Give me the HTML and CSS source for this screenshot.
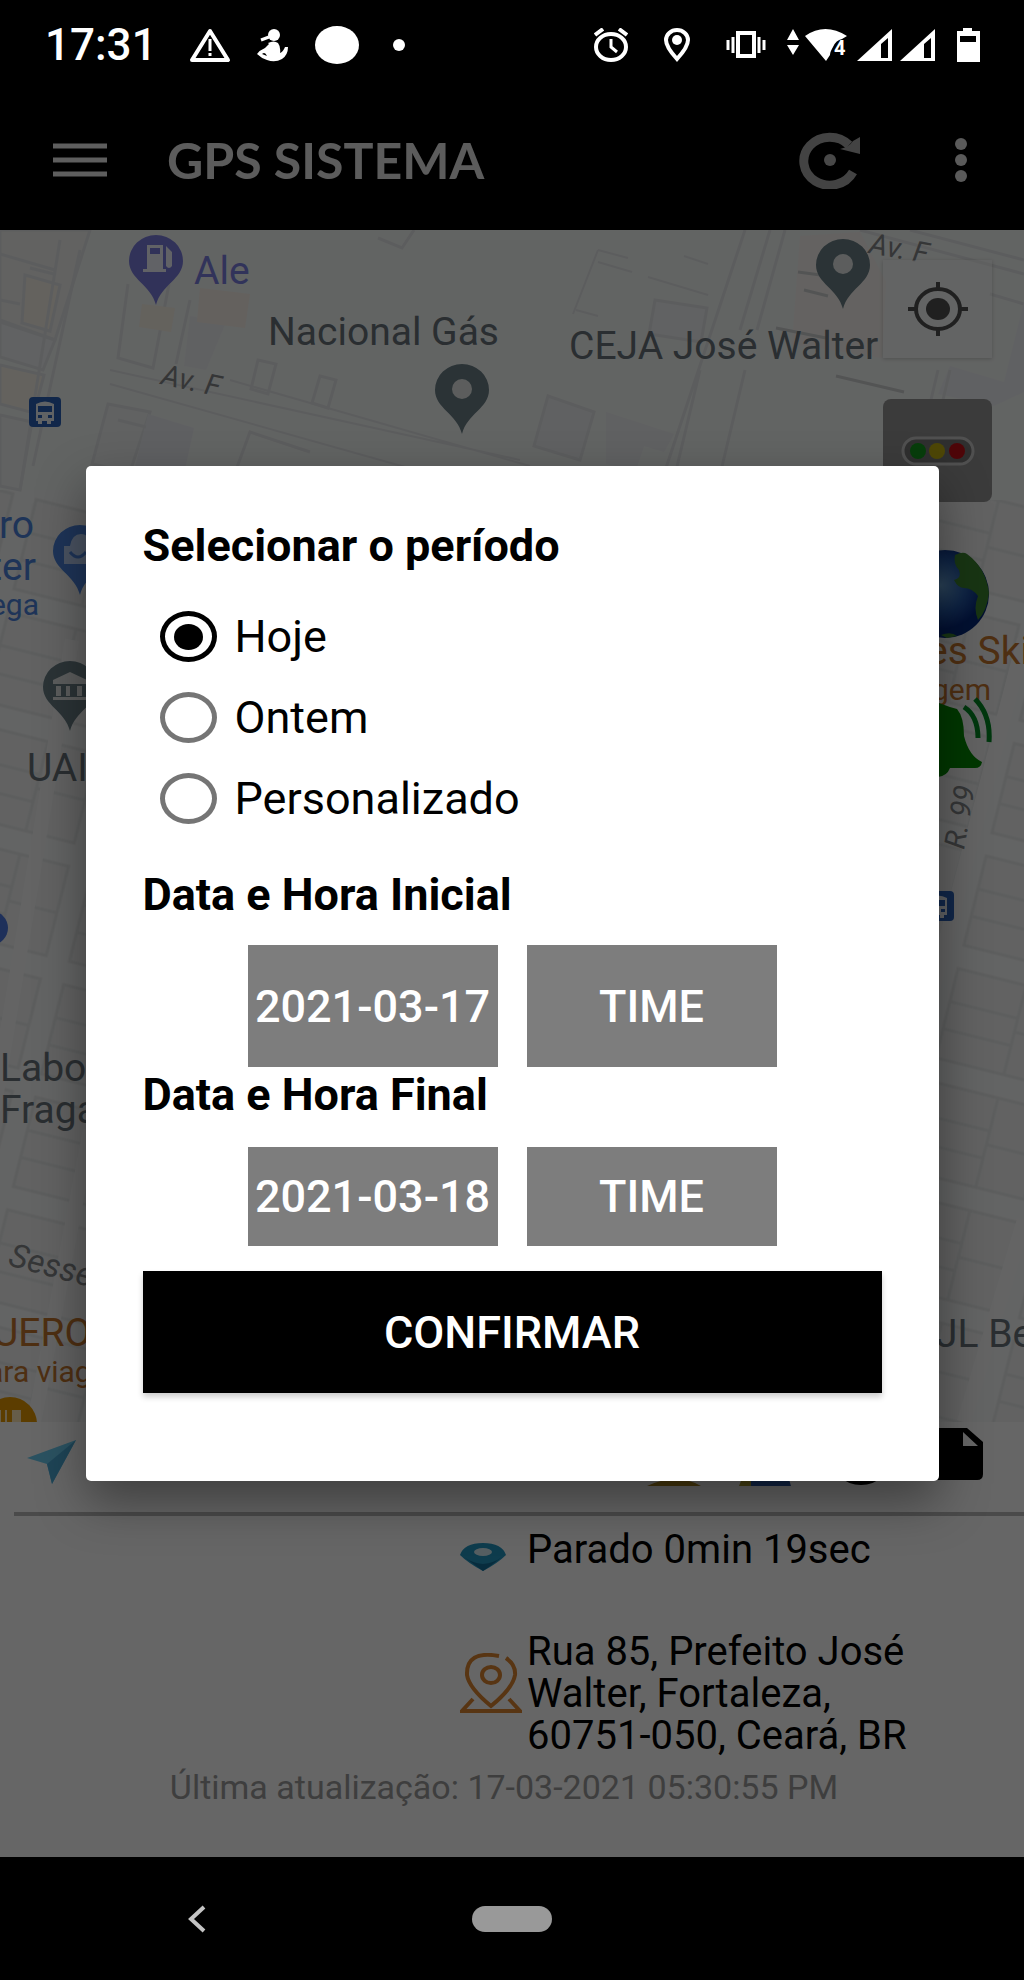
FILE: index.html
```html
<!DOCTYPE html>
<html lang="pt-BR">
<head>
<meta charset="utf-8">
<meta name="viewport" content="width=device-width, initial-scale=1">
<title>GPS Sistema</title>
<link rel="stylesheet" href="styles.css">
</head>
<body>
<div class="status">
  <span class="clock">17:31</span>
  <div class="notices">
    <svg width="42" height="34" viewBox="0 0 42 34"><path d="M21 3 39 32H3Z" fill="none" stroke="#fff" stroke-width="4" stroke-linejoin="round"/><path d="M21 11v12M21 25v3" stroke="#fff" stroke-width="3"/></svg>
    <svg width="32" height="34" viewBox="0 0 32 34" fill="#fff"><ellipse cx="17" cy="7" rx="6" ry="6"/><path d="M11 15q6-3 10 0 3 4 2 10 3-1 5-6h3q0 8-6 12-7 4-15 1-6-2-10-6 3-4 8-6l4-4z"/><path d="M4 12l8-3" stroke="#fff" stroke-width="3"/><path d="M5 26q3-3 5 2z" fill="#000"/></svg>
    <svg width="44" height="38" viewBox="0 0 44 38"><ellipse cx="22" cy="19" rx="22" ry="19" fill="#fff"/></svg>
    <svg width="28" height="12" viewBox="0 0 28 12"><circle cx="14" cy="6" r="6" fill="#fff"/></svg>
  </div>
  <div class="notices modes">
    <svg width="34" height="34" viewBox="0 0 34 34" fill="none" stroke="#fff"><ellipse cx="17" cy="19" rx="15" ry="13" stroke-width="4"/><path d="M1 7l8-6M33 7l-8-6" stroke-width="4"/><path d="M17 11v8l6 5" stroke-width="3"/></svg>
    <svg width="26" height="34" viewBox="0 0 26 34"><path d="M13 31Q2 19 2 12a11 10 0 0 1 22 0q0 7-11 19z" fill="none" stroke="#fff" stroke-width="4"/><circle cx="13" cy="12" r="5" fill="#fff"/></svg>
    <svg width="40" height="28" viewBox="0 0 40 28" fill="none" stroke="#fff"><rect x="12" y="2" width="16" height="23" stroke-width="4"/><path d="M2 9v10M38 9v10M7 6v16M33 6v16" stroke-width="3"/></svg>
  </div>
  <div class="notices signal">
    <svg width="150" height="34" viewBox="0 0 150 34" fill="#fff"><path d="M7 1l6 11H1zM7 27l6-10H1z"/><path d="M19 8q20-14 42 0l-5 3q-6 1-9 8-3 5-3 8l-4 6z"/><path d="M71 33 106 1v32zM114 33 149 1v32z"/><path d="M95 16l7-6v20h-7zM138 16l7-6v20h-7z" fill="#000"/><text x="48" y="27" class="wifi-band">4</text></svg>
    <svg width="24" height="36" viewBox="0 0 24 36"><path d="M7 1h9v3h8v31H1V4h6z" fill="#fff"/><path d="M4 9h16v6H4z" fill="#000"/></svg>
  </div>
</div>

<div class="screen">
  <header class="appbar">
    <button class="icon-btn" aria-label="Menu"><svg width="54" height="36" viewBox="0 0 54 36"><path d="M0 4h54M0 18h54M0 32h54" stroke="#ececec" stroke-width="5"/></svg></button>
    <h1>GPS SISTEMA</h1>
    <button class="icon-btn" aria-label="Atualizar"><svg width="62" height="58" viewBox="0 0 62 58"><path d="M54 41A26 24 0 1 1 50 14" fill="none" stroke="#a8a8a8" stroke-width="9"/><path d="M61 6v17l-20-5q9-2 13-8z" fill="#a8a8a8"/><circle cx="31" cy="29" r="6" fill="#b4b4b4"/></svg></button>
    <button class="icon-btn more" aria-label="Mais opções"><svg width="12" height="44" viewBox="0 0 12 44" fill="#e0e0e0"><circle cx="6" cy="6" r="6"/><circle cx="6" cy="22" r="6"/><circle cx="6" cy="38" r="6"/></svg></button>
  </header>

  <section class="map">
    <svg class="map-canvas" viewBox="0 230 1024 1192" role="img" aria-label="Mapa">
      <defs>
        <pattern id="blocks" width="144" height="116" patternUnits="userSpaceOnUse" patternTransform="rotate(14)">
          <rect width="144" height="116" fill="#f8f9f9"/>
          <path d="M12 12h120v92H12zM12 46h70v28H12M82 12v92M82 60h50" fill="#f4f6f6" stroke="#e8ebeb" stroke-width="3"/>
        </pattern>
        <g id="pin"><path d="M0 70C-5 50-27 44-27 26a27 26 0 0 1 54 0C27 44 5 50 0 70z"/></g>
        <g id="bus"><rect width="32" height="30" rx="4" fill="#2c63b8"/><path d="M7 7q9-5 18 0v17h-3v3h-4v-3h-5v3H9v-3H7z" fill="#f0f4fa"/><path d="M9 9h14v6H9zM9 18h4v3H9zM19 18h4v3h-4z" fill="#2c63b8"/></g>
      </defs>
      <rect y="230" width="1024" height="1192" fill="#f6f9f8"/>
      <rect y="490" width="90" height="932" fill="url(#blocks)"/>
      <rect x="930" y="500" width="94" height="922" fill="url(#blocks)"/>
      <g stroke="#e6e9ea" stroke-width="3" fill="none">
        <path d="M0 230h90l-35 110-55-20z" fill="#f4f4f3"/>
        <path d="M25 275l35 10-10 46-28-8z" fill="#faf5ea"/>
        <path d="M0 322l55 18-12 30-43-13z" fill="#f2f4f7"/><path d="M0 365l44 10-10 38-34-9z" fill="#faf6ec"/>
        <path d="M0 415l32 7-12 68-20-4z" fill="#f3f5f5"/>
        <path d="M0 254l55 16M30 268l24 6M0 300l20 4"/>
        <path d="M80 250L33 466M60 240L20 490"/>
        <path d="M128 284l-10 74 35 10 16-84M190 300l-14 64"/>
        <path d="M190 316l36 6-20 48-22-4z" fill="#f1f3f6" stroke="none"/>
        <path d="M200 288l50 6-5 34-48-6z" fill="#faf3ea" stroke="none"/><path d="M142 304l33 4-4 24-32-5z" fill="#faf4e8" stroke="none"/>
        <path d="M108 404l42 8-20 60-38-8z" fill="#f2f4f5"/><path d="M148 414l46 14-10 46-50-4z" fill="#eef1f6" stroke="none"/>
        <path d="M118 420l28 7M236 470l14-38 60 20"/><path d="M258 360l18 4-8 30-17-5zM320 376l16 4-8 28-16-5z"/>
        <path d="M378 238l24 10 12-18"/>
        <path d="M110 370L520 460M110 384L430 474M230 380L530 466" stroke-width="2"/>
        <path d="M745 230L660 486M770 230L740 330M700 370L675 475M745 370L720 475M785 230l-28 100"/>
        <path d="M598 250l30 8M684 256l24 8M648 277l60 18M576 310l22 6M598 250l-25 64M598 262l34 10" stroke-width="2"/>
        <path d="M655 300l52 8-6 34-52-8z" fill="#f2f4f7"/>
        <path d="M800 236l60-4 26 50-4 76-90-14z" fill="#faf6f2" stroke="none"/>
        <path d="M776 328l50 10M804 290l24 6M798 272l30 4M836 376l68 16" stroke="#cfd2d3"/>
        <path d="M548 396l46 16-14 48-46-14z" fill="#f1f3f6"/><path d="M606 412l68 22-10 18-20-6-8 24-30-6z" fill="#f0f2f5" stroke="none"/>
        <path d="M860 230l164 44M910 230l114 30M990 294l34 10"/>
        <path d="M950 366l54 16 20-80v90l-30 14-56-12z" fill="#f1f3f7" stroke="none"/>
        <path d="M938 370l-8 34M950 370l-8 34"/>
      </g>
      <g stroke="#fbfbfb" stroke-width="14"><path d="M72 640L-6 1110M90 1130l-56 292M1024 640L930 1000M1024 1220l-60 202"/></g>

      <use href="#pin" x="156" y="235" fill="#7c7edf"/>
      <path d="M147 245h16v24h3v3h-23v-3h4zM150 248v6h10v-6zM166 246l6 6v14q-3 4-6 0v-8" fill="#f2f4ff" fill-rule="evenodd"/>
      <g fill="#6b8088"><use href="#pin" x="462" y="364"/><use href="#pin" x="843" y="239"/><use href="#pin" x="70" y="661"/></g>
      <g fill="#e6e9e8"><circle cx="462" cy="389" r="10"/><circle cx="843" cy="264" r="10"/><path d="M53 680l17-8 17 8v4H53zM56 686h5v10h-5zM66 686h4v10h-4zM77 686h5v10h-5zM53 697h34v3H53z"/></g>
      <use href="#pin" x="80" y="525" fill="#4b83dc"/>
      <path d="M64 546h30l-2 18H64zM70 546q2-12 11-12t8 12" fill="#b8d0f4"/><path d="M70 552q8 10 16 0" fill="none" stroke="#4b83dc" stroke-width="3"/>
      <circle cx="-9" cy="928" r="17" fill="#4b78e0"/>
      <circle cx="10" cy="1424" r="27" fill="#e69a00"/><path d="M-6 1410v12M0 1410v12M6 1410v12M13 1411h7v11h-7z" stroke="#ffe9b8" stroke-width="2" fill="#ffe9b8"/>
      <use href="#bus" x="29" y="397"/><use href="#bus" x="922" y="891"/>

      <g class="place">
        <text x="268" y="345">Nacional Gás</text>
        <text x="569" y="359">CEJA José Walter</text>
        <text x="27" y="781">UAI</text>
        <text x="0" y="1081">Labo</text>
        <text x="0" y="1123">Fraga</text>
        <text x="936" y="1347">JL Be</text>
        <text x="194" y="284" class="fuel">Ale</text>
      </g>
      <g class="place shop">
        <text x="34" y="538">ro</text><text x="36" y="580">ter</text><text x="39" y="615" class="sub">ega</text>
      </g>
      <g class="place food">
        <text x="-7" y="1346">UERO</text><text x="-13" y="1382" class="sub">ara viag</text>
        <text x="927" y="664">es Ski</text><text x="932" y="700" class="sub">gem</text>
      </g>
      <g class="street">
        <text transform="translate(160 384) rotate(12)">Av. F</text>
        <text transform="translate(868 253) rotate(10)">Av. F</text>
        <text transform="translate(7 1265) rotate(15)" class="wide">Sesse</text>
        <text transform="translate(964 850) rotate(-80)">R. 99</text>
      </g>
    </svg>
    <div class="map-tools">
      <button class="tool locate" aria-label="Minha localização"><svg width="60" height="54" viewBox="0 0 60 54"><ellipse cx="30" cy="27" rx="22" ry="20" fill="none" stroke="#505050" stroke-width="4"/><ellipse cx="30" cy="27" rx="12" ry="11" fill="#505050"/><path d="M30 0v9M30 45v9M0 27h9M51 27h9" stroke="#505050" stroke-width="4"/></svg></button>
      <button class="tool traffic" aria-label="Trânsito"><svg width="74" height="30" viewBox="0 0 74 30"><rect x="2" y="2" width="70" height="26" rx="13" fill="#777" stroke="#c8c8c8" stroke-width="3"/><circle cx="17" cy="15" r="8" fill="#129a1c"/><circle cx="36" cy="15" r="8" fill="#c0b010"/><circle cx="56" cy="15" r="8" fill="#c41018"/></svg></button>
      <button class="tool" aria-label="Tipo de mapa"><svg width="109" height="102" viewBox="0 0 109 102"><defs><radialGradient id="sea" cx="45%" cy="40%"><stop offset="0" stop-color="#6aa4d8"/><stop offset=".6" stop-color="#2458a8"/><stop offset="1" stop-color="#06287c"/></radialGradient></defs><ellipse cx="62" cy="51" rx="44" ry="44" fill="url(#sea)"/><path d="M72 12q8-4 12-1 19 14 22 39-2 18-11 27-5-12 0-24-6-8-14-8-6 0-10-8 8-2 5-10-6-6-4-15z" fill="#3d8430"/><path d="M58 92q10-4 16 1l-10 2z" fill="#3d8430"/></svg></button>
      <button class="tool" aria-label="Alertas"><svg width="109" height="94" viewBox="0 0 109 94"><path d="M56 17q10 4 18 6 7 8 7 27 5 20 18 26-1 6-7 6H67q-3 8-12 9-10-1-13-9H10q-6-6 0-10 14-10 14-30 4-24 24-25z" fill="#008a00"/><path d="M81 21q14 9 14 31M92 13q16 16 14 43" fill="none" stroke="#008a24" stroke-width="5"/></svg></button>
    </div>
  </section>

  <section class="details">
    <div class="actions">
      <button class="icon-btn" aria-label="Navegar"><svg width="50" height="60" viewBox="0 0 50 60"><path d="M49 14 25 58 20 38 0 32z" fill="#6ccdf2"/><path d="M49 14 25 58 20 38z" fill="#4cabd8"/></svg></button>
      <div class="action-group">
        <button class="icon-btn" aria-label="Rota"><svg width="60" height="60" viewBox="0 0 60 60"><path d="M0 60q30-14 54 0z" fill="#b08a20"/></svg></button>
        <button class="icon-btn" aria-label="Mapa externo"><svg width="60" height="60" viewBox="0 0 60 60"><path d="M0 60l8-20h10v20z" fill="#b0a030"/><path d="M12 60V40h34l6 20z" fill="#2c58a8"/></svg></button>
        <button class="icon-btn" aria-label="Câmera"><svg width="60" height="60" viewBox="0 0 60 60"><ellipse cx="30" cy="32" rx="30" ry="27"/></svg></button>
        <button class="icon-btn" aria-label="Relatório"><svg width="60" height="60" viewBox="0 0 60 60"><path d="M6 2h38l16 14v32q0 6-6 6H6q-6 0-6-6V8q0-6 6-6z"/><path d="M40 6v14h15z" fill="#fff"/></svg></button>
      </div>
    </div>
    <div class="info">
      <svg class="stopped" width="46" height="28" viewBox="0 0 46 28"><path d="M0 12Q4 0 23 0t23 12Q38 20 23 28 8 20 0 12z" fill="#2496c0"/><path d="M4 14q8 6 19 7 11-1 19-7-10 8-19 14z" fill="#126e98"/><ellipse cx="23" cy="9" rx="9" ry="4" fill="#d8eef4"/></svg>
      <p>Parado 0min 19sec</p>
      <svg class="address" width="62" height="60" viewBox="0 0 62 60" fill="none" stroke="#dc8530" stroke-width="4"><path d="M39 3Q6-3 7 22q2 13 24 31 22-18 24-31 1-10-9-17"/><ellipse cx="31" cy="22" rx="9" ry="8"/><path d="M13 46L2 58h58L49 46"/></svg>
      <p>Rua 85, Prefeito José Walter, Fortaleza, 60751-050, Ceará, BR</p>
    </div>
    <p class="updated">Última atualização: 17-03-2021 05:30:55 PM</p>
  </section>

  <div class="scrim">
    <form class="dialog" role="dialog" aria-label="Selecionar o período">
      <fieldset>
        <legend>Selecionar o período</legend>
        <label class="option"><input type="radio" name="period" checked>Hoje</label>
        <label class="option"><input type="radio" name="period">Ontem</label>
        <label class="option"><input type="radio" name="period">Personalizado</label>
      </fieldset>
      <h2>Data e Hora Inicial</h2>
      <div class="pickers start"><button type="button">2021-03-17</button><button type="button">TIME</button></div>
      <h2>Data e Hora Final</h2>
      <div class="pickers end"><button type="button">2021-03-18</button><button type="button">TIME</button></div>
      <button type="button" class="confirm">CONFIRMAR</button>
    </form>
  </div>
</div>

<nav class="sysnav">
  <button class="icon-btn" aria-label="Voltar"><svg width="18" height="28" viewBox="0 0 18 28"><path d="M16 2 3 14l13 12" fill="none" stroke="#c4c4c4" stroke-width="4"/></svg></button>
  <button class="home" aria-label="Início"></button>
</nav>
</body>
</html>
```

FILE: styles.css
```css
* { box-sizing: border-box; }
body {
  margin: 0;
  min-height: 100vh;
  display: flex;
  flex-direction: column;
  background: #000;
  font-family: Roboto, "Liberation Sans", sans-serif;
  color: #000;
}
h1, h2, p, fieldset, legend { margin: 0; padding: 0; border: 0; }
svg { display: block; flex: none; }
button { margin: 0; padding: 0; border: 0; background: none; font: inherit; color: inherit; }

.status {
  height: 90px;
  display: flex;
  align-items: center;
  padding: 0 44px 0 45px;
  color: #fff;
}
.clock { font-size: 44px; font-weight: 500; margin-right: 32px; }
.notices { display: flex; align-items: center; gap: 26px; }
.modes { margin-left: auto; gap: 36px; }
.signal { margin-left: 20px; gap: 20px; }
.wifi-band { font: 700 20px Roboto, sans-serif; }

.screen { position: relative; flex: 1; display: flex; flex-direction: column; }
.appbar {
  height: 140px;
  display: flex;
  align-items: center;
  padding: 0 57px 0 53px;
  background: #000;
}
.appbar h1 {
  flex: 1;
  margin-left: 60px;
  font: 700 50px/56px Lato, sans-serif;
  color: #e6e6e6;
}
.more { margin-left: 94px; }

.map { position: relative; }
.map-canvas { width: 100%; height: auto; }
.place { font: 400 39px Roboto, sans-serif; fill: #69747c; }
.place .sub { font-size: 30px; }
.fuel { fill: #7c80e0; }
.shop { fill: #4b83dc; text-anchor: end; }
.food { fill: #c4752e; }
.street { font: italic 400 29px Roboto, sans-serif; fill: #85888a; }
.wide { font-size: 33px; }
.map-tools {
  position: absolute;
  top: 30px;
  right: 32px;
  display: flex;
  flex-direction: column;
  gap: 41px;
}
.tool { display: grid; place-items: center; }
.locate { width: 109px; height: 98px; background: rgba(250, 250, 250, .4); box-shadow: 0 1px 4px rgba(0, 0, 0, .2); }
.traffic { width: 109px; height: 103px; background: #959595; border-radius: 8px; }

.details { flex: 1; background: #fff; }
.actions {
  height: 94px;
  margin-left: 14px;
  padding: 4px 41px 0 13px;
  display: flex;
  justify-content: space-between;
  align-items: flex-start;
  border-bottom: 4px solid #b8b8b8;
}
.action-group { display: flex; gap: 32px; }
.info {
  display: grid;
  grid-template-columns: 62px 1fr;
  column-gap: 5px;
  row-gap: 60px;
  align-items: center;
  margin: 13px 90px 0 460px;
  font-size: 40px;
  line-height: 42px;
}
.stopped { align-self: end; }
.address { align-self: start; margin-top: 22px; }
.updated {
  margin-top: 10px;
  text-align: center;
  padding-right: 16px;
  font-size: 34px;
  line-height: 40px;
  color: #9c9c9c;
}

.scrim {
  position: absolute;
  inset: 0;
  display: grid;
  place-items: center;
  background: rgba(0, 0, 0, .6);
}
.dialog {
  width: calc(100% - 171px);
  padding: 52px 57px 88px;
  display: flex;
  flex-direction: column;
  background: #fff;
  border-radius: 5px;
  box-shadow: 0 20px 50px rgba(0, 0, 0, .4);
}
legend, h2 { font-size: 45px; font-weight: 700; line-height: 56px; }
legend { margin-bottom: 22px; }
.option {
  height: 81px;
  display: flex;
  align-items: center;
  gap: 18px;
  padding-left: 17px;
  font-size: 45px;
}
.option input {
  appearance: none;
  flex: none;
  width: 57px;
  height: 51px;
  margin: 0;
  display: grid;
  place-items: center;
  border: 5px solid #757575;
  border-radius: 50%;
}
.option input:checked { border-color: #000; }
.option input:checked::before { content: ""; width: 29px; height: 26px; border-radius: 50%; background: #000; }
fieldset + h2 { margin-top: 28px; }
.pickers { display: flex; justify-content: center; gap: 29px; }
.pickers button {
  width: 250px;
  height: 122px;
  background: #7d7d7d;
  color: #fff;
  font-size: 45px;
  font-weight: 500;
}
.start { margin-top: 22px; }
.end { margin-top: 24px; }
.end button { height: 99px; }
.confirm {
  height: 122px;
  margin-top: 25px;
  background: #000;
  color: #fff;
  font-size: 45px;
  font-weight: 500;
  box-shadow: 0 4px 6px rgba(0, 0, 0, .2);
}

.sysnav {
  height: 123px;
  display: grid;
  grid-template-columns: 1fr 80px 1fr;
  align-items: center;
  background: #000;
}
.sysnav .icon-btn { margin-left: 188px; justify-self: start; }
.home { height: 26px; border-radius: 13px; background: #999; }
```
